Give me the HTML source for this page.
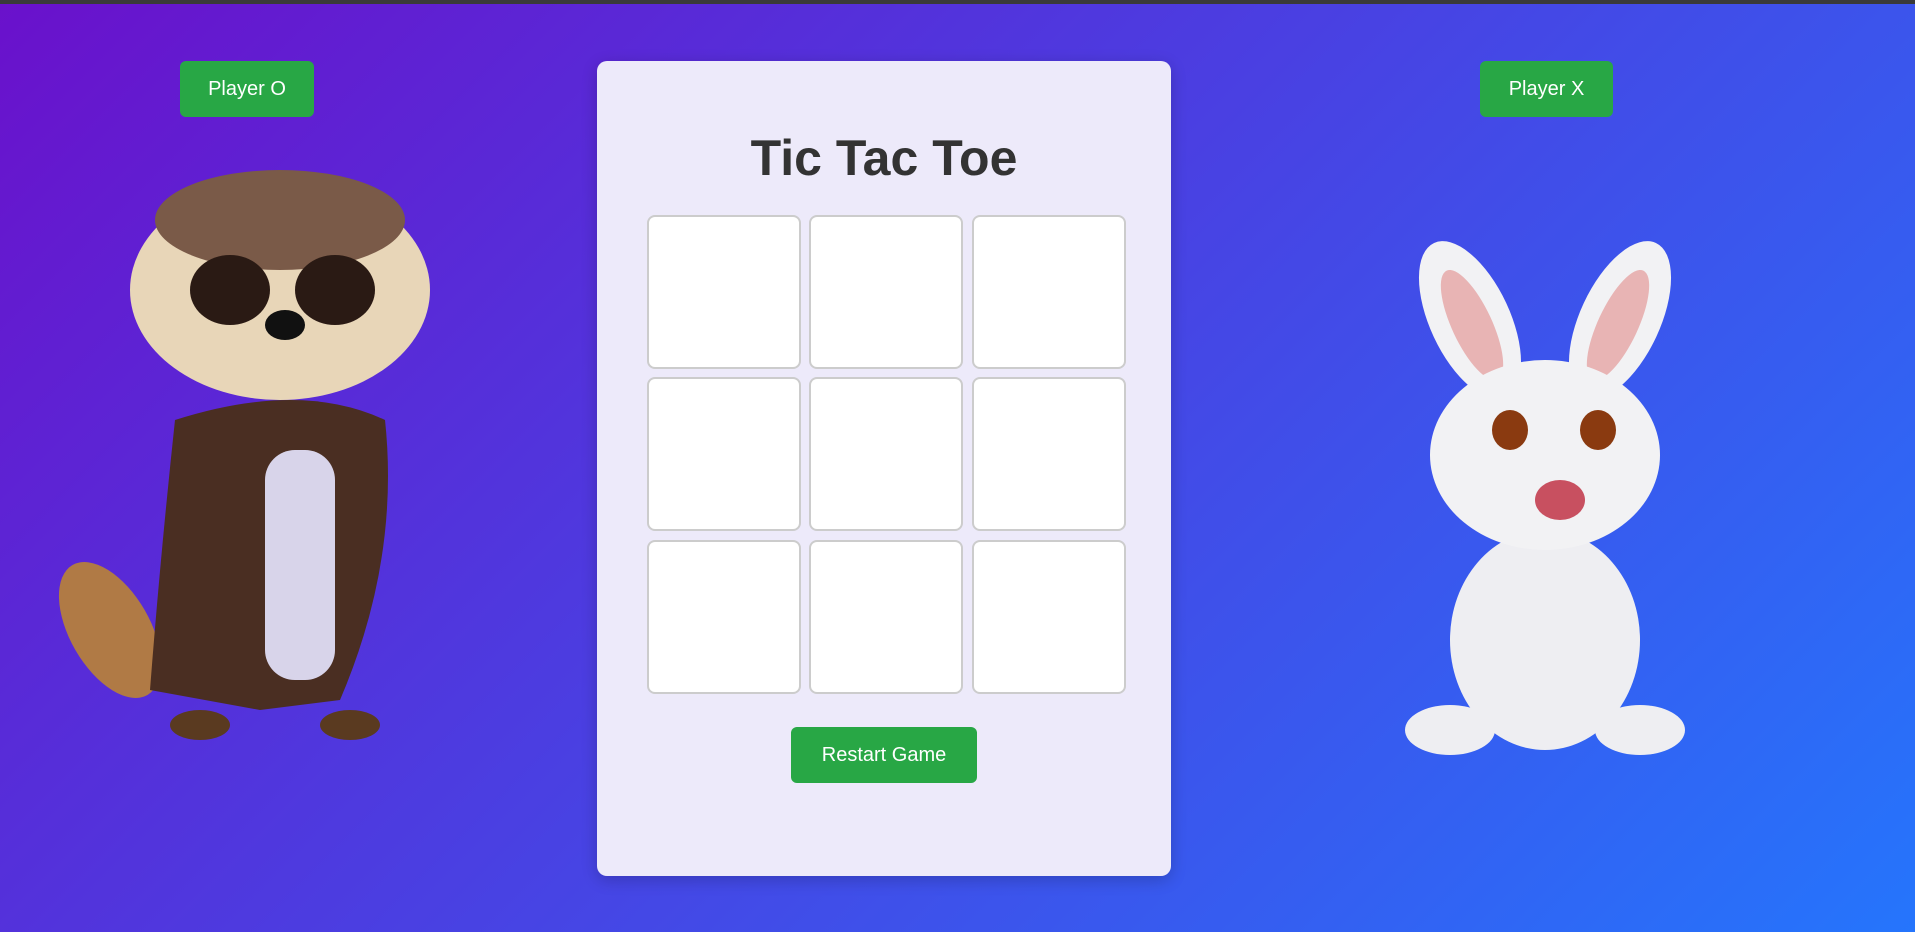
<!DOCTYPE html>
<html><head><meta charset="utf-8"><style>
html,body{margin:0;padding:0;width:1915px;height:932px;overflow:hidden}
body{background:linear-gradient(135deg,#6a11cb 0%,#2575fc 100%);font-family:"Liberation Sans",Arial,sans-serif;position:relative}
.topbar{position:absolute;left:0;top:0;width:100%;height:4px;background:#3a3a3a}
.btn{position:absolute;background:#28a745;color:#fff;border-radius:6px;font-size:20px;display:flex;align-items:center;justify-content:center}
.card{position:absolute;left:597px;top:61px;width:574px;height:815px;background:#edeafa;border-radius:10px;box-shadow:0 4px 16px rgba(0,0,0,.2)}
h1{position:absolute;left:597px;width:574px;top:129px;margin:0;text-align:center;font-size:50px;color:#333;font-weight:bold}
.cell{position:absolute;width:150px;height:150px;background:#fff;border:2px solid #ccc;border-radius:8px}
</style></head><body>
<div class="topbar"></div>
<div class="btn" style="left:180px;top:61px;width:134px;height:56px">Player O</div>
<div class="btn" style="left:1480px;top:61px;width:133px;height:56px">Player X</div>
<div class="card"></div>
<h1>Tic Tac Toe</h1>
<div class="cell" style="left:647px;top:215px"></div>
<div class="cell" style="left:809px;top:215px"></div>
<div class="cell" style="left:972px;top:215px"></div>
<div class="cell" style="left:647px;top:377px"></div>
<div class="cell" style="left:809px;top:377px"></div>
<div class="cell" style="left:972px;top:377px"></div>
<div class="cell" style="left:647px;top:540px"></div>
<div class="cell" style="left:809px;top:540px"></div>
<div class="cell" style="left:972px;top:540px"></div>
<div class="btn" style="left:791px;top:727px;width:186px;height:56px">Restart Game</div>
<svg style="position:absolute;left:0;top:0" width="1915" height="932">
 <ellipse cx="110" cy="630" rx="40" ry="75" fill="#b07a45" transform="rotate(-30 110 630)"/>
 <path d="M175 420 Q160 560 150 690 L260 710 L340 700 Q400 560 385 420 Q300 380 175 420Z" fill="#4a2e22"/>
 <rect x="265" y="450" width="70" height="230" rx="30" fill="#d8d4ea"/>
 <ellipse cx="280" cy="290" rx="150" ry="110" fill="#e8d6b8"/>
 <ellipse cx="280" cy="220" rx="125" ry="50" fill="#7a5a48"/>
 <ellipse cx="230" cy="290" rx="40" ry="35" fill="#2a1a14"/>
 <ellipse cx="335" cy="290" rx="40" ry="35" fill="#2a1a14"/>
 <ellipse cx="285" cy="325" rx="20" ry="15" fill="#111"/>
 <ellipse cx="200" cy="725" rx="30" ry="15" fill="#5a3a20"/>
 <ellipse cx="350" cy="725" rx="30" ry="15" fill="#5a3a20"/>
 <ellipse cx="1470" cy="320" rx="40" ry="85" fill="#f2f2f4" transform="rotate(-25 1470 320)"/>
 <ellipse cx="1620" cy="320" rx="40" ry="85" fill="#f2f2f4" transform="rotate(25 1620 320)"/>
 <ellipse cx="1472" cy="325" rx="20" ry="60" fill="#e8b4b4" transform="rotate(-25 1472 325)"/>
 <ellipse cx="1618" cy="325" rx="20" ry="60" fill="#e8b4b4" transform="rotate(25 1618 325)"/>
 <ellipse cx="1545" cy="640" rx="95" ry="110" fill="#eeeef2"/>
 <ellipse cx="1545" cy="455" rx="115" ry="95" fill="#f2f2f4"/>
 <ellipse cx="1510" cy="430" rx="18" ry="20" fill="#8a3a10"/>
 <ellipse cx="1598" cy="430" rx="18" ry="20" fill="#8a3a10"/>
 <ellipse cx="1560" cy="500" rx="25" ry="20" fill="#c85060"/>
 <ellipse cx="1450" cy="730" rx="45" ry="25" fill="#eeeef2"/>
 <ellipse cx="1640" cy="730" rx="45" ry="25" fill="#eeeef2"/>
</svg>
</body></html>
